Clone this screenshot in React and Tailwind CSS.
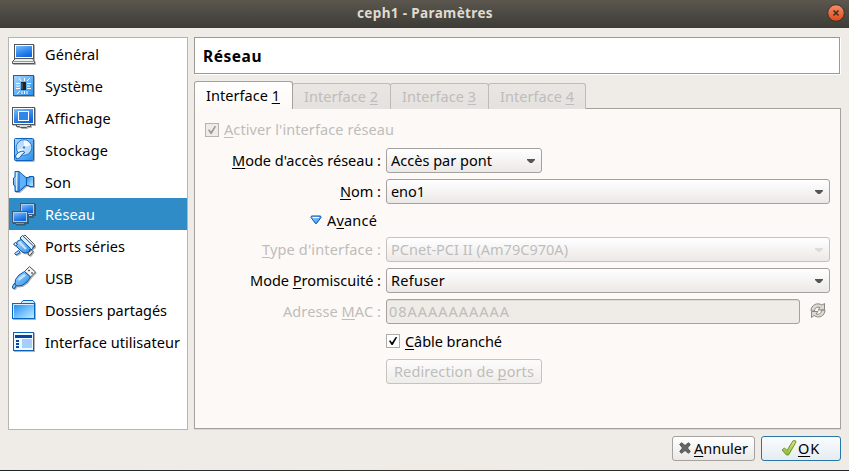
import React, { useLayoutEffect, useRef, useState } from "react";

/* Label with an underlined mnemonic ("_X"), spaced to fill a width. */
function Label({ text, w, className = "" }) {
  const ref = useRef(null);
  const [spacing, setSpacing] = useState(0);
  useLayoutEffect(() => {
    const natural = ref.current.getBoundingClientRect().width;
    setSpacing((w - natural) / text.replace("_", "").length);
  }, []);
  const i = text.indexOf("_");
  return (
    <span className={`block shrink-0 overflow-visible whitespace-pre ${className}`} style={{ width: w }}>
      <span ref={ref} style={{ letterSpacing: spacing }}>
        {i < 0 ? text : (
          <>
            {text.slice(0, i)}
            <span className="underline decoration-1 underline-offset-2 [text-decoration-skip-ink:none]">{text[i + 1]}</span>
            {text.slice(i + 2)}
          </>
        )}
      </span>
    </span>
  );
}

function Icon({ children }) {
  return <svg className="size-6 shrink-0 drop-shadow-[1px_1px_0.5px_rgba(0,0,0,0.3)]" viewBox="0 0 24 24">{children}</svg>;
}

const General = () => (
  <Icon>
    <rect x="2.5" y="2.5" width="19" height="14" fill="#fff" stroke="#555" />
    <rect x="4" y="4" width="16" height="11" fill="url(#blue)" />
    <path d="M3.500 16.500h17l2 3v2h-22v-2z" fill="#eee" stroke="#555" />
    <path d="M1 19.500h21" stroke="#999" />
  </Icon>
);
const System = () => (
  <Icon>
    <rect x="1.500" y="1.500" width="20" height="20" fill="url(#sky)" stroke="#1263b8" />
    <rect x="9" y="8" width="5" height="8" fill="#222" />
    <path d="M10 9v6" stroke="#777" />
    <path d="M4 9.500h4M4 12h4M4 14.500h4M15 9.500h4M15 12h3M15 14.500h4M10 17v3M12.500 17v3M15 17v3M8 17l-3 3M15 7l3-3M12.500 7V4M9 7L7 4" stroke="#fff" fill="none" />
  </Icon>
);
const Display = () => (
  <Icon>
    <rect x="0.500" y="1.500" width="22" height="17" fill="#fff" stroke="#555" />
    <rect x="2" y="3" width="19" height="14" fill="url(#blue)" />
    <rect x="6.500" y="5.500" width="10" height="9" fill="#2d86e8" stroke="#fff" />
    <path d="M4.500 18.500h14v2h-3l-1 1h-6l-1-1h-3z" fill="#ddd" stroke="#555" />
  </Icon>
);
const Storage = () => (
  <Icon>
    <rect x="2.500" y="0.500" width="19" height="22" rx="1" fill="url(#sky)" stroke="#1263b8" />
    <circle cx="12" cy="9.500" r="7.800" fill="#b9dcff" stroke="#1469c5" strokeWidth=".8" />
    <path d="M12 9.500V2.500A7 7 0 0 1 18.500 7zM12 9.500L5.500 12A7 7 0 0 0 12 16.500z" fill="#fff" opacity=".8" />
    <circle cx="12" cy="9.500" r="1.800" fill="#3389dc" stroke="#fff" strokeWidth=".7" />
    <path d="M11.500 13c-3 0-7 2-8 5l1 3 3-1 3-4 2-1z" fill="#e9f5ff" stroke="#1263b8" />
  </Icon>
);
const Sound = () => (
  <Icon>
    <path d="M14 7.500h3v-1h4.500v10H17v-1h-3z" fill="url(#folder)" stroke="#0b5db4" />
    <path d="M3 1.500h4l7.500 6.500v7L7 21.500H3V16l-1.500-1V8L3 7z" fill="url(#sky)" stroke="#0b5db4" />
    <path d="M7.500 3.500l6 5v6l-6 5z" fill="#5fb2fb" />
    <path d="M4.500 2.500v18" stroke="#d5edff" />
    <path d="M7 2v19" stroke="#0b5db4" />
  </Icon>
);
const Network = () => (
  <Icon>
    <rect x="8.500" y="1.500" width="14" height="11" fill="#a9cdec" stroke="#45576a" />
    <rect x="10" y="3" width="11" height="8" fill="url(#blue)" />
    <path d="M16.500 12.500h4v2h-4z" fill="#ccc" stroke="#45576a" />
    <rect x="0.500" y="9.500" width="15" height="11" fill="#a9cdec" stroke="#45576a" />
    <rect x="2" y="11" width="12" height="8" fill="url(#blue)" />
    <path d="M3.500 20.500h9v1.500h-9z" fill="#ccc" stroke="#45576a" />
  </Icon>
);
const Serial = () => (
  <Icon>
    <path d="M11 2.500l2-1.500 9.500 9.500V13l-2 1z" fill="#f4f4f4" stroke="#555" />
    <path d="M8 4l2.500-2.500 11 10.500-1 3-2 1z" fill="#d6eeff" stroke="#0753a7" />
    <path d="M4.500 11.500l.5-4 4-2 9.500 9-2 4-4.500.5-3-2-4-4z" fill="url(#sky)" stroke="#0753a7" />
    <path d="M7 8l7 7" stroke="#c9e8ff" strokeWidth="2" />
    <path d="M1.500 10l2-1.500 2 2-2 1.500zM2.500 19.500l4-3 1.500 2-4 2.500z" fill="#c5e5ff" stroke="#0753a7" />
    <path d="M16.500 18.500l3-2.500 1.500 1.500-3 4-2-1z" fill="#eee" stroke="#444" />
  </Icon>
);
const Usb = () => (
  <Icon>
    <path d="M12.500 5.500l5-5 6 5.500-5 5z" fill="#f2f2f2" stroke="#555" />
    <path d="M16.500 5l1-1M19.500 7.500l1-1" stroke="#333" strokeWidth="1.500" />
    <path d="M3 19L1.800 21" stroke="#0753a7" strokeWidth="3.600" strokeLinecap="round" />
    <path d="M3 19L1.800 21" stroke="#83c8fa" strokeWidth="1.800" strokeLinecap="round" />
    <path d="M3 18.500l.5-5L7 9l5.500-3.500 6 5.500-3.500 5-5 3.500-5 .5z" fill="url(#sky)" stroke="#0753a7" />
    <path d="M6 12.500L12 8l2 1.500-7 5.500z" fill="#e7f6ff" opacity=".7" />
  </Icon>
);
const Folder = () => (
  <Icon>
    <path d="M9.500 6V4.500l1.500-2h10l1.500 2V6z" fill="#d6edff" stroke="#0b66bd" />
    <rect x="0.500" y="5.500" width="22" height="15" fill="url(#folder)" stroke="#0b66bd" />
    <path d="M1.500 20V6.500h20" fill="none" stroke="#d7efff" />
  </Icon>
);
const Ui = () => (
  <Icon>
    <rect x="1.500" y="2.500" width="20" height="18" fill="#f2f8ff" stroke="#0b62bd" />
    <rect x="3" y="5" width="17" height="3" fill="#0645a0" />
    <path d="M4 10h3v2H4zM4 13h3v2H4zM4 16h3v2H4z" fill="#0645a0" />
    <rect x="10" y="9" width="10" height="9" fill="#a5ceff" />
  </Icon>
);

const items = [
  ["Général", 54, General],
  ["Système", 58, System],
  ["Affichage", 66, Display],
  ["Stockage", 63, Storage],
  ["Son", 26, Sound],
  ["Réseau", 50, Network],
  ["Ports séries", 80, Serial],
  ["USB", 28, Usb],
  ["Dossiers partagés", 122, Folder],
  ["Interface utilisateur", 135, Ui],
];

function Arrow({ off }) {
  return (
    <svg className="ml-auto h-[5px] w-2 translate-y-px" viewBox="0 0 8 5">
      <path d="M0 0h8v1L5 4H3L0 1z" fill={off ? "#dedbd8" : "#555"} />
    </svg>
  );
}

function Combo({ text, w, off, className }) {
  return (
    <div className={`flex h-[25px] items-center rounded-[3px] border bg-linear-to-b from-white to-[#ebe9e7] pr-[6px] pl-1 ${off ? "border-[#c6c2bf] text-[#bebdbb]" : "border-[#a5a19e]"} ${className}`}>
      <Label text={text} w={w} className="-translate-y-px" />
      <Arrow off={off} />
    </div>
  );
}

function Row({ label, w, off, className = "", children }) {
  return (
    <div className={`flex h-[25px] items-center ${className}`}>
      <div className={`mr-[5px] flex w-[176px] shrink-0 justify-end ${off ? "text-[#bebdbb]" : ""}`}>
        {label && <Label text={label} w={w} className="-translate-y-px" />}
      </div>
      {children}
    </div>
  );
}

function Check({ off }) {
  return (
    <svg className="size-[14px] shrink-0" viewBox="0 0 14 14">
      <rect x=".5" y=".5" width="13" height="13" fill={off ? "#efebe7" : "#fff"} stroke={off ? "#b8b4b0" : "#b0aca8"} />
      <path d="M3 7l1.300-.8L6 8.600 9.700 3l1.500.3L6.700 11H5.500z" fill={off ? "#999" : "#000"} />
    </svg>
  );
}

export default function App() {
  return (
    <div className="flex h-[471px] w-[849px] flex-col overflow-hidden bg-[#efebe7] font-['Noto_Sans',sans-serif] text-[14.5px] leading-5 text-black">
      <svg className="absolute size-0">
        <defs>
          <linearGradient id="blue" x1="0" y1="0" x2=".5" y2="1"><stop stopColor="#7bbcff" /><stop offset=".5" stopColor="#3c91f2" /><stop offset="1" stopColor="#1268e0" /></linearGradient>
          <linearGradient id="sky" x1="0" y1="0" x2="1" y2="1"><stop stopColor="#a9d7ff" /><stop offset="1" stopColor="#268fee" /></linearGradient>
          <linearGradient id="folder" x1="0" y1="0" x2="1" y2="1"><stop stopColor="#1a86ea" /><stop offset=".5" stopColor="#6dbcff" /><stop offset="1" stopColor="#c7f0ff" /></linearGradient>
          <linearGradient id="orange" x1="0" y1="0" x2="0" y2="1"><stop stopColor="#f68e6b" /><stop offset="1" stopColor="#df4a16" /></linearGradient>
          <linearGradient id="green" x1="0" y1="0" x2="0" y2="1"><stop stopColor="#dbe98a" /><stop offset="1" stopColor="#8db92f" /></linearGradient>
        </defs>
      </svg>
      <header className="flex h-7 shrink-0 items-center bg-linear-to-b from-[#5b574e] to-[#3d3c37] pl-[357px] text-[13.5px] font-bold text-[#dfdbd2]">
        <Label text="ceph1 - Paramètres" w={136} className="-translate-y-px" />
        <svg className="mr-1 ml-auto size-[18px] -translate-y-px" viewBox="0 0 18 18">
          <circle cx="9" cy="9" r="8.300" fill="url(#orange)" stroke="#37352f" />
          <path d="M6.500 6.500l5 5m0-5l-5 5" stroke="#3c2e25" strokeWidth="1.600" />
        </svg>
      </header>
      <main className="flex h-[402px] shrink-0 gap-[6px] pt-[9px] pl-2">
        <nav className="h-[393px] w-[180px] shrink-0 border border-[#b8b4b0] bg-white">
          {items.map(([text, w, Pic]) => (
            <div key={text} className={`flex h-8 items-center gap-[9px] pl-[3px] ${text === "Réseau" ? "bg-[#308cc6] text-white" : ""}`}>
              <Pic />
              <Label text={text} w={w} />
            </div>
          ))}
        </nav>
        <div className="w-[647px]">
          <div className="flex h-[37px] w-[646px] items-center border border-[#9c9995] bg-white pl-2 font-bold shadow-[1px_1px_0_#fff]">
            <Label text="Réseau" w={59} className="text-[15.5px]" />
          </div>
          <div className="mt-[7px] flex h-7 items-end">
            <div className="relative z-10 h-7 w-[99px] rounded-t-[3px] border border-b-0 border-[#a5a19e] bg-linear-to-b from-white to-[#fdf9f6] pt-1 pl-[11px]">
              <Label text="Interface _1" w={74} className="-translate-y-px" />
            </div>
            {["2", "3", "4"].map((n) => (
              <div key={n} className="-ml-px h-[26px] w-[99px] rounded-t-[3px] border border-b-0 border-[#bfbbb8] bg-linear-to-b from-[#eae6e3] to-[#e5e1de] pt-[3px] pl-[11px] text-[#bebdbb] last:w-[98px]">
                <Label text={`Interface _${n}`} w={74} className="-translate-y-px" />
              </div>
            ))}
          </div>
          <section className="-mt-px h-[321px] border border-[#a5a19e] bg-[#fdf9f6] pl-[10px] shadow-[0_1px_0_#dad6d2]">
            <div className="flex h-[39px] items-center pt-[3px] text-[#bebdbb]">
              <Check off />
              <Label text="_Activer l'interface réseau" w={170} className="ml-[5px] -translate-y-px" />
            </div>
            <Row label="_Mode d'accès réseau :" w={149}><Combo text="Accès par pont" w={101} className="w-[156px]" /></Row>
            <Row label="_Nom :" w={41} className="mt-[6px]"><Combo text="eno1" w={34} className="w-[444px]" /></Row>
            <div className="mt-1 flex h-[25px] items-center pl-[105px]">
              <svg className="h-[10px] w-3 -translate-y-px" viewBox="0 0 12 10">
                <path d="M1.500 1h9l.5 1.500-4.500 6h-1L1 2.500z" fill="url(#sky)" stroke="#0753a7" strokeLinejoin="round" />
                <path d="M3 2.500h6" stroke="#fff" />
              </svg>
              <Label text="A_vancé" w={50} className="ml-[5px] -translate-y-px" />
            </div>
            <Row label="_Type d'interface :" w={119} off className="mt-1"><Combo off text="PCnet-PCI II (Am79C970A)" w={177} className="w-[444px]" /></Row>
            <Row label="Mode _Promiscuité :" w={131} className="mt-[6px]"><Combo text="Refuser" w={54} className="w-[444px]" /></Row>
            <Row label="Adresse _MAC :" w={98} off className="mt-[6px]">
              <div className="flex h-[25px] w-[414px] items-center rounded-[3px] border border-[#a5a19e] bg-[#efebe7] pl-[2px] text-[#bebdbb] shadow-[inset_0_1px_0_#dfdbd7]">
                <Label text="08AAAAAAAAAA" w={121} className="-translate-y-px" />
              </div>
              <svg className="ml-[10px] h-[17px] w-4 -translate-y-px" viewBox="0 0 16 17" fill="none">
                <path d="M14.500 1.500V8H8l2-2.500C7 4.500 4.500 6 4.500 9H1C1 3 7 0 12 3zM1.500 15.500V9.500H8L6 12c3.500 1 5.500-1 5.500-4H15c0 6-6 9-11 5.500z" fill="#dcd9d4" stroke="#8d8982" strokeLinejoin="round" />
              </svg>
            </Row>
            <Row className="mt-1"><Check /><Label text="_Câble branché" w={97} className="ml-[5px]" /></Row>
            <Row className="mt-[6px]">
              <button className="flex h-[25px] w-[156px] items-center rounded-[3px] border border-[#c6c2bf] bg-linear-to-b from-[#fdfcfb] to-[#efedea] pl-[7px] text-[#bebdbb]">
                <Label text="Redirection de _ports" w={140} className="-translate-y-px text-left" />
              </button>
            </Row>
          </section>
        </div>
      </main>
      <footer className="flex grow justify-end gap-[6px] pt-[6px] pr-2">
        <button className="flex h-[25px] w-[83px] items-center rounded-[3px] border border-[#a5a19e] bg-linear-to-b from-white to-[#ebe9e7] pl-[6px]">
          <svg className="size-3 -translate-y-px" viewBox="0 0 12 12"><path d="M.7 2.500L2.500.7 6 3.500 9.500.7l1.800 1.800L8.500 6l2.800 3.500-1.800 1.800L6 8.500l-3.500 2.800L.7 9.500 3.500 6z" fill="#666" stroke="#444" strokeWidth=".8" /></svg>
          <Label text="_Annuler" w={54} className="ml-[3px] -translate-y-px text-left" />
        </button>
        <button className="flex h-[25px] w-20 items-center rounded-[3px] border border-[#2a75a8] bg-linear-to-b from-[#fafcfd] to-[#e5ecf1] pl-[19px]">
          <svg className="h-4 w-4 -translate-y-px" viewBox="0 0 16 16"><path d="M1 10l2.500-2L6 10.500 12 .8h2.500L15 2 7.500 15H5.500z" fill="url(#green)" stroke="#6c9226" /></svg>
          <Label text="_OK" w={22} className="ml-px -translate-y-px text-left" />
        </button>
      </footer>
      <div className="h-px shrink-0 bg-linear-to-r from-[#17262b] via-[#38312f] to-[#25262b]" />
    </div>
  );
}
